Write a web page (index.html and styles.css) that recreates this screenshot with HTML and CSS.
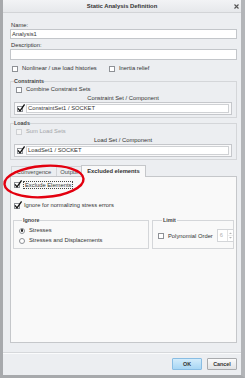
FILE: index.html
```html
<!DOCTYPE html>
<html>
  <head>
    <meta charset="utf-8" />
    <meta name="viewport" content="width=device-width, initial-scale=1" />
    <title>Static Analysis Definition</title>
    <link rel="stylesheet" href="styles.css">
  </head>
  <body>
    <div class="window">
      <div class="titlebar">
        <span class="title">Static Analysis Definition</span>
        <svg class="close" width="5" height="5" viewBox="0 0 5 5">
          <path d="M0.5 0.5 L4.5 4.5 M4.5 0.5 L0.5 4.5" stroke="#555" stroke-width="1.1" />
        </svg>
      </div>

      <div class="content">
        <label class="field-label">Name:</label>
        <div class="textbox">Analysis1</div>
        <label class="field-label desc">Description:</label>
        <div class="textbox tall"></div>

        <div class="check-row">
          <span class="check"><i class="box"></i>Nonlinear / use load histories</span>
          <span class="check"><i class="box"></i>Inertia relief</span>
        </div>

        <fieldset class="group">
          <legend>Constraints</legend>
          <div class="check indent"><i class="box"></i>Combine Constraint Sets</div>
          <div class="list-head">Constraint Set / Component</div>
          <div class="list">
            <i class="box checked">
              <svg class="tick" width="8" height="8" viewBox="0 0 8 8"><polyline points="1,4.3 3,6.8 7.6,0.4" /></svg>
            </i>
            <span class="item-text">ConstraintSet1 / SOCKET</span>
          </div>
        </fieldset>

        <fieldset class="group loads">
          <legend>Loads</legend>
          <div class="check indent disabled"><i class="box"></i>Sum Load Sets</div>
          <div class="list-head">Load Set / Component</div>
          <div class="list">
            <i class="box checked">
              <svg class="tick" width="8" height="8" viewBox="0 0 8 8"><polyline points="1,4.3 3,6.8 7.6,0.4" /></svg>
            </i>
            <span class="item-text">LoadSet1 / SOCKET</span>
          </div>
        </fieldset>

        <div class="tabs">
          <span class="tab tab-conv">Convergence</span>
          <span class="tab tab-out">Output</span>
          <span class="tab tab-excl active">Excluded elements</span>
        </div>

        <div class="panel">
          <div class="check indent">
            <i class="box checked">
              <svg class="tick" width="8" height="8" viewBox="0 0 8 8"><polyline points="1,4.3 3,6.8 7.6,0.4" /></svg>
            </i>
            <span class="focus">Exclude Elements</span>
          </div>
          <div class="check indent normalize">
            <i class="box checked">
              <svg class="tick" width="8" height="8" viewBox="0 0 8 8"><polyline points="1,4.3 3,6.8 7.6,0.4" /></svg>
            </i>
            Ignore for normalizing stress errors
          </div>

          <div class="options">
            <fieldset class="group ignore">
              <legend>Ignore</legend>
              <div class="radio-row"><i class="radio on"></i>Stresses</div>
              <div class="radio-row"><i class="radio"></i>Stresses and Displacements</div>
            </fieldset>
            <fieldset class="group limit">
              <legend>Limit</legend>
              <div class="limit-row">
                <i class="box"></i>
                <span class="limit-label">Polynomial Order</span>
                <span class="spinner">
                  <span class="spin-value">6</span>
                  <span class="spin-arrows">
                    <svg width="5" height="11" viewBox="0 0 5 11">
                      <path d="M1 4 L2.5 2.5 L4 4 Z M1 7 L2.5 8.5 L4 7 Z" fill="#b5b5b5" />
                      <path d="M0 5.5 H5" stroke="#e0e0e0" stroke-width="0.6" />
                    </svg>
                  </span>
                </span>
              </div>
            </fieldset>
          </div>
        </div>
      </div>

      <div class="footer">
        <button class="btn primary">OK</button>
        <button class="btn">Cancel</button>
      </div>

      <!-- red annotation ring drawn on top of the screenshot -->
      <svg class="annotation" width="88" height="42" viewBox="0 0 88 42">
        <ellipse cx="44" cy="19.5" rx="39.6" ry="15.6" transform="rotate(-4 44 19.5)"
          fill="none" stroke="#e3000f" stroke-width="2.4" />
      </svg>
    </div>
  </body>
</html>
```

FILE: styles.css
```css
* {
  box-sizing: border-box;
}
body {
  margin: 0;
  background: #fff;
  font-family: "Liberation Sans", Arial, sans-serif;
  font-size: 5.8px;
  color: #333;
}
.window {
  position: relative;
  width: 245px;
  height: 378px;
  display: flex;
  flex-direction: column;
  background: #eceef1;
  border-left: 3px solid #a7a9ac;
  border-right: 4px solid #b3b5b8;
  border-bottom: 3px solid #a7a9ac;
}
.titlebar {
  height: 13px;
  flex: none;
  display: grid;
  grid-template-columns: 1fr auto 1fr;
  align-items: center;
  background: linear-gradient(#f2f3f5, #e6e8eb);
  border-bottom: 1px solid #d2d4d7;
}
.title {
  grid-column: 2;
  font-weight: bold;
  font-size: 5.9px;
}
.close {
  justify-self: end;
  margin-right: 2px;
}
.content {
  flex: 1;
  display: flex;
  flex-direction: column;
  padding: 0 4px 0 7px;
}
.field-label {
  display: block;
  line-height: 7px;
  padding-left: 1px;
  margin-top: 9px;
}
.field-label.desc {
  margin-top: 3px;
}
.textbox {
  height: 10px;
  line-height: 8px;
  padding-left: 1px;
  background: #fff;
  border: 1px solid #c3c6ca;
}
.textbox.tall {
  height: 11px;
}
.check-row {
  display: grid;
  grid-template-columns: 97px auto;
  margin: 5px 0 0 2px;
  line-height: 7px;
}
.check {
  display: flex;
  align-items: center;
  gap: 4px;
  line-height: 7px;
  white-space: nowrap;
}
.check.indent {
  margin-left: 2px;
}
.check.disabled {
  color: #a3a5a8;
}
.check.disabled .box {
  border-color: #cfd1d4;
  background: #f4f4f4;
}
.box {
  position: relative;
  flex: none;
  width: 6px;
  height: 6px;
  background: #fff;
  border: 1px solid #8e9196;
}
.tick {
  position: absolute;
  left: -1px;
  top: -3px;
}
.tick polyline {
  fill: none;
  stroke: #111;
  stroke-width: 1.3;
}
fieldset.group {
  margin: 6px 0 0;
  padding: 1px 4px 2px 3px;
  border: 1px solid #d4d6d9;
  min-width: 0;
}
fieldset.group.loads {
  margin-top: 2px;
}
legend {
  padding: 0;
  line-height: 7px;
  font-weight: bold;
  font-size: 5.4px;
  color: #444;
}
.list-head {
  margin-top: 2px;
  line-height: 7px;
  text-align: center;
}
.list {
  height: 13px;
  display: flex;
  align-items: center;
  gap: 3px;
  padding: 1px 2px 1px 1px;
  background: #f9f9fa;
  border: 1px solid #c5c7cb;
}
.list .box {
  margin-left: 1px;
}
.item-text {
  flex: 1;
  height: 9px;
  line-height: 7px;
  padding-left: 1px;
  background: #fff;
  border: 1px solid #cfd1d4;
}
.tabs {
  display: flex;
  align-items: flex-end;
  margin-top: 5px;
  padding-left: 1px;
  height: 11px;
  flex: none;
}
.tab {
  height: 10px;
  line-height: 10px;
  text-align: center;
  white-space: nowrap;
  color: #4a4a4a;
  border: 1px solid #d3d5d8;
  border-bottom: none;
  border-right: none;
}
.tab-conv {
  width: 45px;
}
.tab-out {
  width: 25px;
}
.tab-excl {
  width: 65px;
}
.tab.active {
  position: relative;
  height: 12px;
  margin-bottom: -1px;
  line-height: 11px;
  font-weight: bold;
  color: #333;
  background: #f9f9f9;
  border: 1px solid #c5c7ca;
  border-bottom: none;
}
.panel {
  flex: 1;
  margin-bottom: 9px;
  padding: 4px 2px 0;
  background: #f9f9f9;
  border: 1px solid #c5c7ca;
}
.panel .check.indent {
  margin-left: 1px;
}
.focus {
  margin-left: -1px;
  padding: 0 1px;
  line-height: 6px;
  border: 1px dotted #444;
}
.check.normalize {
  margin-top: 13px;
}
.options {
  display: grid;
  grid-template-columns: 136px 1fr;
  gap: 3px;
  margin-top: 8px;
}
.options fieldset.group {
  margin: 0;
  padding: 3px 4px 4px 5px;
}
.options legend {
  margin-left: 3px;
  padding: 0 1px;
}
.options .limit {
  padding-left: 4px;
}
.options .limit legend {
  margin-left: 4px;
}
.radio-row {
  display: flex;
  align-items: center;
  gap: 4px;
  line-height: 7px;
}
.radio-row + .radio-row {
  margin-top: 3px;
}
.radio {
  flex: none;
  width: 6px;
  height: 6px;
  border-radius: 50%;
  background: #fff;
  border: 1px solid #8e9196;
  display: grid;
  place-items: center;
}
.radio.on::after {
  content: "";
  width: 2.6px;
  height: 2.6px;
  border-radius: 50%;
  background: #222;
}
.limit-row {
  display: flex;
  align-items: center;
  gap: 4px;
  margin-top: 2px;
}
.limit-label {
  white-space: nowrap;
}
.spinner {
  flex: none;
  margin-left: auto;
  width: 17px;
  height: 13px;
  display: flex;
  background: #fff;
  border: 1px solid #d3d5d8;
}
.spin-value {
  flex: 1;
  padding-left: 2px;
  line-height: 11px;
  color: #b0b0b0;
}
.spin-arrows {
  width: 6px;
  display: flex;
  align-items: center;
  border-left: 1px solid #e2e2e2;
}
.footer {
  flex: none;
  display: flex;
  justify-content: flex-end;
  gap: 5px;
  padding: 5px 4px;
  border-top: 1px solid #d6d8db;
  box-shadow: inset 0 1px 0 #fafbfc;
}
.btn {
  width: 30px;
  height: 12px;
  padding: 0;
  font-family: inherit;
  font-size: 5.4px;
  font-weight: bold;
  color: #333;
  border: 1px solid #a9abae;
  border-radius: 1px;
  background: linear-gradient(#fbfbfb, #e1e2e4);
}
.btn.primary {
  border-color: #89bde3;
  background: linear-gradient(#d3ecfb, #a7d6f4);
}
.annotation {
  position: absolute;
  left: -3px;
  top: 162px;
}
```
